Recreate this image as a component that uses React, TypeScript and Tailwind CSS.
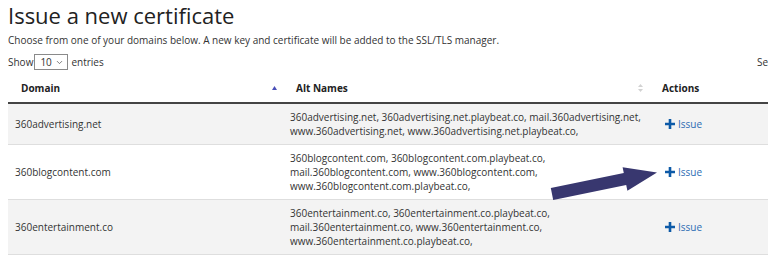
import { ChevronDown } from "lucide-react";

const rows = [
  {
    domain: "360advertising.net",
    alt: [
      "360advertising.net, 360advertising.net.playbeat.co, mail.360advertising.net,",
      "www.360advertising.net, www.360advertising.net.playbeat.co,",
    ],
  },
  {
    domain: "360blogcontent.com",
    alt: [
      "360blogcontent.com, 360blogcontent.com.playbeat.co,",
      "mail.360blogcontent.com, www.360blogcontent.com,",
      "www.360blogcontent.com.playbeat.co,",
    ],
  },
  {
    domain: "360entertainment.co",
    alt: [
      "360entertainment.co, 360entertainment.co.playbeat.co,",
      "mail.360entertainment.co, www.360entertainment.co,",
      "www.360entertainment.co.playbeat.co,",
    ],
  },
];

function PlusIcon() {
  return (
    <svg width="10" height="10" viewBox="0 0 10 10" className="shrink-0">
      <path d="M3.7 0h2.6v3.7H10v2.6H6.3V10H3.7V6.3H0V3.7h3.7z" fill="#0d5aa7" />
    </svg>
  );
}

export default function App() {
  return (
    <div
      className="relative w-[768px] h-[259px] overflow-hidden bg-white text-[#333]"
      style={{ fontFamily: "'Open Sans', 'Noto Sans', sans-serif" }}
    >
      <div className="w-[870px] pl-2">
        <h1 className="text-[22px] leading-[30px] text-[#222]">Issue a new certificate</h1>
        <p className="mt-[3px] text-[10px] leading-[14px] text-[#333]">
          Choose from one of your domains below. A new key and certificate will be added to the SSL/TLS manager.
        </p>

        {/* Show entries / search */}
        <div className="mt-[7px] flex items-center text-[10px] leading-[14px] text-[#333]">
          <div className="flex w-[749px] items-center">
            <span>Show</span>
            <div className="ml-[1px] flex h-[16px] w-[34px] items-center justify-between border border-[#8a8a8a] bg-white pl-[5px] pr-[3px]">
              <span>10</span>
              <ChevronDown size={9} strokeWidth={2} className="text-[#555]" />
            </div>
            <span className="ml-[3px]">entries</span>
          </div>
          <span>Search:</span>
        </div>

        {/* Table */}
        <div className="text-[10px] leading-[14px]">
          <div className="flex border-b-2 border-[#444] font-bold text-[#222]">
            <div className="flex w-[275px] items-center justify-between pl-[13px] pr-[6px] pt-[11px] pb-[7px]">
              <span>Domain</span>
              <svg width="5" height="4" viewBox="0 0 5 4">
                <path d="M2.5 0L5 4H0z" fill="#4a4fb8" />
              </svg>
            </div>
            <div className="flex w-[366px] items-center justify-between pl-[13px] pr-[6px] pt-[11px] pb-[7px]">
              <span>Alt Names</span>
              <svg width="5" height="8" viewBox="0 0 5 8">
                <path d="M2.5 0L5 3H0z" fill="#d2d2d2" />
                <path d="M2.5 8L5 5H0z" fill="#d2d2d2" />
              </svg>
            </div>
            <div className="flex-1 pl-[13px] pt-[11px] pb-[7px]">Actions</div>
          </div>

          {rows.map((r, i) => (
            <div
              key={r.domain}
              className={`flex items-center border-b border-[#dedede] ${i % 2 === 0 ? "bg-[#f3f3f3]" : "bg-white"}`}
            >
              <div className="w-[275px] pl-[7px]">{r.domain}</div>
              <div className="w-[366px] py-[6px] pl-[7px] whitespace-nowrap">
                {r.alt.map((line) => (
                  <div key={line}>{line}</div>
                ))}
              </div>
              <div className="flex flex-1 items-center gap-[3px] pl-[16px] text-[#2c6cb4]">
                <PlusIcon />
                <span>Issue</span>
              </div>
            </div>
          ))}
        </div>
      </div>

      {/* annotation arrow */}
      <svg className="absolute left-0 top-0" width="768" height="259" viewBox="0 0 768 259">
        <polygon
          points="550.8,188.1 623.8,173.1 622.6,167.3 657,172.5 627.4,190.7 626.2,184.9 553.2,199.9"
          fill="#38376f"
        />
      </svg>
    </div>
  );
}
